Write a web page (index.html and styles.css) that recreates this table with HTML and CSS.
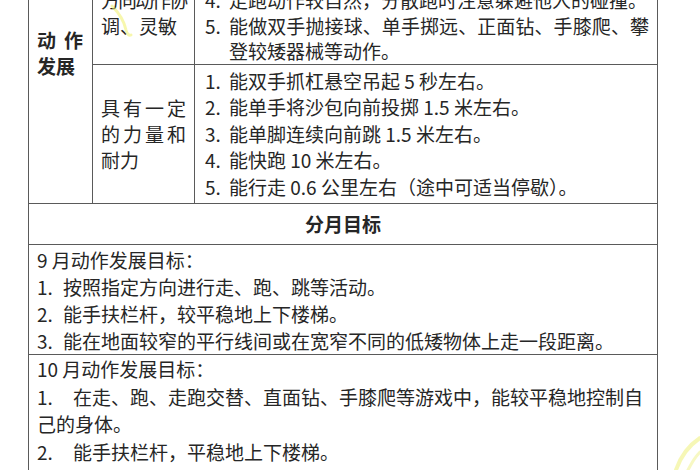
FILE: index.html
```html
<!DOCTYPE html>
<html lang="zh-CN">
<head>
<meta charset="utf-8">
<title>动作发展目标</title>
<link rel="stylesheet" href="styles.css">
</head>
<body>
<div class="page">
  <table class="doc">
    <colgroup>
      <col class="c1">
      <col class="c2">
      <col class="c3">
    </colgroup>
    <tr class="row-a">
      <td class="area" rowspan="2"><span class="sp">动</span>作<br>发展</td>
      <td class="goal goal-a"><span class="tight">方向动作协</span><br>调、灵敏</td>
      <td class="items items-a">
        <div class="it"><span class="n">4.</span>走跑动作较自然，分散跑时注意躲避他人的碰撞。</div>
        <div class="it"><span class="n">5.</span>能做双手抛接球、单手掷远、正面钻、手膝爬、攀登较矮器械等动作。</div>
      </td>
    </tr>
    <tr class="row-b">
      <td class="goal goal-b">具有一定的力量和耐力</td>
      <td class="items items-b">
        <div class="it"><span class="n">1.</span>能双手抓杠悬空吊起 5 秒左右。</div>
        <div class="it"><span class="n">2.</span>能单手将沙包向前投掷 1.5 米左右。</div>
        <div class="it"><span class="n">3.</span>能单脚连续向前跳 1.5 米左右。</div>
        <div class="it"><span class="n">4.</span>能快跑 10 米左右。</div>
        <div class="it"><span class="n">5.</span>能行走 0.6 公里左右（途中可适当停歇）。</div>
      </td>
    </tr>
    <tr class="row-c">
      <td class="head" colspan="3">分月目标</td>
    </tr>
    <tr class="row-d">
      <td class="month" colspan="3">
        <div>9 月动作发展目标：</div>
        <div><span class="n9">1.</span>按照指定方向进行走、跑、跳等活动。</div>
        <div><span class="n9">2.</span>能手扶栏杆，较平稳地上下楼梯。</div>
        <div><span class="n9">3.</span>能在地面较窄的平行线间或在宽窄不同的低矮物体上走一段距离。</div>
      </td>
    </tr>
    <tr class="row-e">
      <td class="month month-e" colspan="3">
        <div>10 月动作发展目标：</div>
        <div><span class="n10">1.</span>在走、跑、走跑交替、直面钻、手膝爬等游戏中，能较平稳地控制自己的身体。</div>
        <div><span class="n10">2.</span>能手扶栏杆，平稳地上下楼梯。</div>
        <div><span class="n10">3.</span>能在较窄的平行线间走一段距离。</div>
      </td>
    </tr>
  </table>
  <svg class="marks" width="700" height="470" viewBox="0 0 700 470" aria-hidden="true">
    <path d="M112 6 C118 12 124 20 126 30 C127 34 129 36 131 35" fill="none" stroke="#f1f06a" stroke-width="3" stroke-linecap="round" opacity="0.55"/>
    <path d="M676 470 C680 458 688 446 700 438" fill="none" stroke="#eef07a" stroke-width="4" stroke-linecap="round" opacity="0.55"/>
    <path d="M688 470 C692 462 696 456 700 452" fill="none" stroke="#eef07a" stroke-width="3" stroke-linecap="round" opacity="0.45"/>
  </svg>
</div>
</body>
</html>
```

FILE: styles.css
```css
html, body {
  margin: 0;
  padding: 0;
  background: #ffffff;
}

body {
  font-family: "Noto Sans CJK SC", "Noto Sans", sans-serif;
  font-size: 19px;
  color: #262626;
  overflow: hidden;
}

.page {
  position: relative;
  width: 700px;
  height: 470px;
  overflow: hidden;
  padding-left: 28px;
  box-sizing: border-box;
}

.doc {
  width: 629px;
  table-layout: fixed;
  border-collapse: collapse;
  margin-top: -14px;
}

.c1 { width: 64px; }
.c2 { width: 102px; }
.c3 { width: 463px; }

.doc td {
  border: 1px solid #5a5a5a;
  padding: 0 8px;
  vertical-align: top;
}

.area {
  font-weight: 700;
  line-height: 26px;
  padding-top: 40px !important;
}

.sp { margin-right: 8px; }

.goal {
  line-height: 26px;
}

.goal-a {
  white-space: nowrap;
  line-height: 25.5px;
}

.tight { letter-spacing: -2px; }

.goal-b {
  vertical-align: middle !important;
  text-align: justify;
}

.items {
  padding-left: 10px !important;
  text-align: justify;
}

.items-a { line-height: 25.5px; }

.items-b {
  line-height: 26.5px;
  padding-top: 3px !important;
  padding-bottom: 3px !important;
}

.it {
  padding-left: 24px;
  text-indent: -24px;
}

.n {
  display: inline-block;
  width: 24px;
  text-indent: 0;
}

.head {
  height: 40px;
  text-align: center;
  vertical-align: middle !important;
  font-weight: 700;
  line-height: 26px;
}

.month {
  line-height: 27px;
  padding-top: 1px !important;
  padding-bottom: 0 !important;
}

.month-e {
  line-height: 27.5px;
  padding-top: 0 !important;
}

.n9 {
  display: inline-block;
  width: 26px;
}

.n10 {
  display: inline-block;
  width: 36px;
}

.marks {
  position: absolute;
  left: 0;
  top: 0;
  pointer-events: none;
}
```
